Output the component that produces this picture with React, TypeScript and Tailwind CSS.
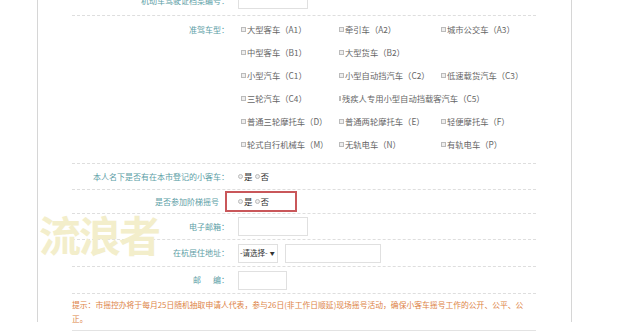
import React from "react";

const font = { fontFamily: '"Noto Sans CJK SC", "Noto Sans", sans-serif' };

function Cb({ text }: { text: string }) {
  return (
    <div className="flex items-center whitespace-nowrap text-[8.3px] text-[#666]">
      <span className="inline-block w-[5px] h-[5px] border border-[#bbb] bg-[#eee] mr-[1px]" />
      <span>{text}</span>
    </div>
  );
}

function Radio({ text }: { text: string }) {
  return (
    <span className="inline-flex items-center mr-[2px] whitespace-nowrap">
      <span className="inline-block w-[5px] h-[5px] rounded-full border border-[#bbb] bg-[#eee] mr-[1px]" />
      <span className="text-[8.5px] text-[#333]">{text}</span>
    </span>
  );
}

const rows: string[][] = [
  ["大型客车（A1）", "牵引车（A2）", "城市公交车（A3）"],
  ["中型客车（B1）", "大型货车（B2）", ""],
  ["小型汽车（C1）", "小型自动挡汽车（C2）", "低速载货汽车（C3）"],
  ["三轮汽车（C4）", "残疾人专用小型自动挡载客汽车（C5）", ""],
  ["普通三轮摩托车（D）", "普通两轮摩托车（E）", "轻便摩托车（F）"],
  ["轮式自行机械车（M）", "无轨电车（N）", "有轨电车（P）"],
];

function Label({ children }: { children: React.ReactNode }) {
  return <div className="w-[157px] shrink-0 text-right whitespace-nowrap text-[8px] text-[#5d9ea6]">{children}</div>;
}

export default function App() {
  return (
    <div className="w-[640px] h-[335px] bg-white overflow-hidden relative" style={font}>
      <div className="ml-[37px] w-[535px] h-[335px] border-l border-r border-[#d6d6d6] pl-[34px]">
        <div className="w-[464px]">
          {/* top partial row */}
          <div className="-mt-[13px] h-[29px] flex items-center border-b border-dashed border-[#dedede]">
            <Label>机动车驾驶证档案编号：</Label>
            <div className="ml-[9px] w-[70px] h-[20px] border border-[#e0e0e0] -mt-[4px]" />
          </div>
          {/* vehicle types */}
          <div className="flex pt-[2px] pb-[7px] border-b border-dashed border-[#dedede]">
            <div className="w-[157px] shrink-0 h-[23px] flex items-center justify-end text-[8px] text-[#5d9ea6]">
              准驾车型：
            </div>
            <div className="ml-[12px]">
              {rows.map((r, i) => (
                <div key={i} className="h-[23px] grid grid-cols-[98px_102px_94px] items-center">
                  {r.map((t, j) => (t ? <Cb key={j} text={t} /> : <div key={j} />))}
                </div>
              ))}
            </div>
          </div>
          <div className="h-[26px] flex items-center border-b border-dashed border-[#dedede]">
            <Label>本人名下是否有在本市登记的小客车：</Label>
            <div className="ml-[9px] flex items-center">
              <Radio text="是" />
              <Radio text="否" />
            </div>
          </div>
          <div className="h-[24px] flex items-center border-b border-dashed border-[#dedede]">
            <div className="w-[147px] shrink-0 text-right text-[8px] text-[#5d9ea6]">是否参加阶梯摇号</div>
            <div className="ml-[6px] w-[72px] h-[21px] border-2 border-[#c9575a] flex items-center pl-[11px]">
              <Radio text="是" />
              <Radio text="否" />
            </div>
          </div>
          <div className="h-[26px] flex items-center border-b border-dashed border-[#dedede]">
            <Label>电子邮箱：</Label>
            <div className="ml-[9px] w-[70px] h-[19px] border border-[#e0e0e0]" />
          </div>
          <div className="h-[27px] flex items-center border-b border-dashed border-[#dedede]">
            <Label>在杭居住地址：</Label>
            <div className="ml-[9px] w-[40px] h-[19px] border border-[#e0e0e0] flex items-center pl-[1px] whitespace-nowrap text-[7.5px] text-[#333]">
              -请选择-<span className="ml-[2px] text-[5px]">▼</span>
            </div>
            <div className="ml-[7px] w-[96px] h-[19px] border border-[#e0e0e0]" />
          </div>
          <div className="h-[27px] flex items-center border-b border-dashed border-[#dedede]">
            <Label>
              邮<span className="inline-block w-[12px]" />编：
            </Label>
            <div className="ml-[9px] w-[49px] h-[19px] border border-[#e0e0e0]" />
          </div>
          <div className="pt-[4px] pb-[4px] text-[7.8px] leading-[14px] text-[#dd8346] border-b border-[#e3e3e3]">
            <div className="whitespace-nowrap">
              提示：市摇控办将于每月25日随机抽取申请人代表，参与26日(非工作日顺延)现场摇号活动，确保小客车摇号工作的公开、公平、公
            </div>
            <div>正。</div>
          </div>
        </div>
      </div>
      <div className="absolute left-[39px] top-[213px] text-[42px] font-bold leading-none text-[#f3eecb] tracking-[-2px]">
        流浪者
      </div>
    </div>
  );
}
